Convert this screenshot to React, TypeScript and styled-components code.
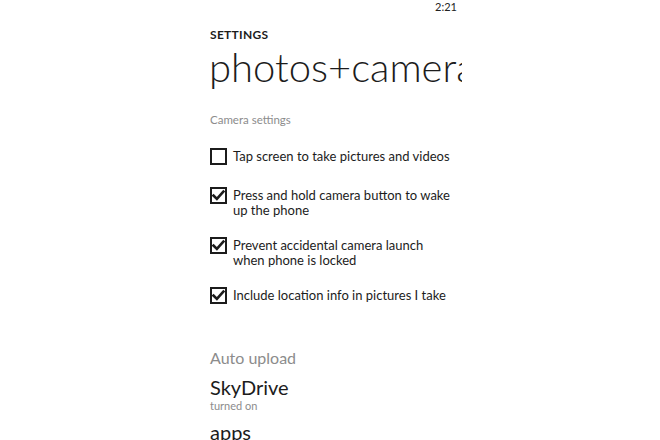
import React from "react";
import styled, { createGlobalStyle } from "styled-components";

const GlobalStyle = createGlobalStyle`
  html, body {
    margin: 0;
    padding: 0;
    background: #ffffff;
  }
  body {
    font-family: Lato, "Open Sans", sans-serif;
    color: #1c1c1c;
  }
`;

const Screen = styled.div`
  width: 264px;
  height: 440px;
  margin: 0 auto;
  overflow: hidden;
  background: #fff;
  display: flex;
  flex-direction: column;
`;

const StatusBar = styled.div`
  height: 17px;
  display: flex;
  justify-content: flex-end;
  align-items: center;
  padding-right: 5px;
  font-size: 11px;
  color: #222;
`;

const Body = styled.div`
  padding-left: 12px;
  display: flex;
  flex-direction: column;
`;

const AppTitle = styled.div`
  margin-top: 15px;
  font-size: 12px;
  font-weight: 700;
  letter-spacing: 0.3px;
  line-height: 14px;
`;

const PageTitle = styled.div`
  margin-top: 5px;
  margin-left: -1px;
  font-size: 40px;
  font-weight: 300;
  line-height: 40px;
  white-space: nowrap;
`;

const SectionLabel = styled.div<{ $big?: boolean }>`
  color: #8c8c8c;
  font-size: ${(p) => (p.$big ? "16px" : "11.5px")};
  line-height: ${(p) => (p.$big ? "18px" : "14px")};
`;

const OptionList = styled.div`
  margin-top: 21px;
  display: flex;
  flex-direction: column;
  gap: 20px;
`;

const Option = styled.label`
  display: flex;
  align-items: flex-start;
  gap: 6px;
  min-height: 19px;
`;

const Box = styled.span`
  flex-shrink: 0;
  width: 17px;
  height: 17px;
  box-sizing: border-box;
  border: 2px solid #1c1c1c;
  display: flex;
  align-items: center;
  justify-content: center;
`;

const OptionText = styled.span`
  font-size: 13px;
  line-height: 14.5px;
  margin-top: 1px;
  width: 222px;
`;

const Item = styled.div`
  display: flex;
  flex-direction: column;
`;

const ItemTitle = styled.div`
  font-size: 20px;
  line-height: 24px;
  font-weight: 400;
`;

const ItemSub = styled.div`
  font-size: 11px;
  line-height: 13px;
  color: #8c8c8c;
`;

const Check = () => (
  <svg width="13" height="13" viewBox="0 0 13 13">
    <path
      d="M1.6 6.6 L4.9 9.9 L11.4 2.6"
      fill="none"
      stroke="#1c1c1c"
      strokeWidth="2.7"
      strokeLinecap="square"
    />
  </svg>
);

const options = [
  { text: "Tap screen to take pictures and videos", on: false },
  { text: "Press and hold camera button to wake up the phone", on: true },
  { text: "Prevent accidental camera launch when phone is locked", on: true },
  { text: "Include location info in pictures I take", on: true },
];

export default function App() {
  return (
    <>
      <GlobalStyle />
      <Screen>
        <StatusBar>2:21</StatusBar>
        <Body>
          <AppTitle>SETTINGS</AppTitle>
          <PageTitle>photos+camera</PageTitle>
          <SectionLabel style={{ marginTop: 26 }}>Camera settings</SectionLabel>
          <OptionList>
            {options.map((o, i) => (
              <Option key={i}>
                <Box>{o.on && <Check />}</Box>
                <OptionText>{o.text}</OptionText>
              </Option>
            ))}
          </OptionList>
          <SectionLabel $big style={{ marginTop: 43 }}>
            Auto upload
          </SectionLabel>
          <Item style={{ marginTop: 8 }}>
            <ItemTitle>SkyDrive</ItemTitle>
            <ItemSub>turned on</ItemSub>
          </Item>
          <Item style={{ marginTop: 8 }}>
            <ItemTitle>apps</ItemTitle>
          </Item>
        </Body>
      </Screen>
    </>
  );
}
